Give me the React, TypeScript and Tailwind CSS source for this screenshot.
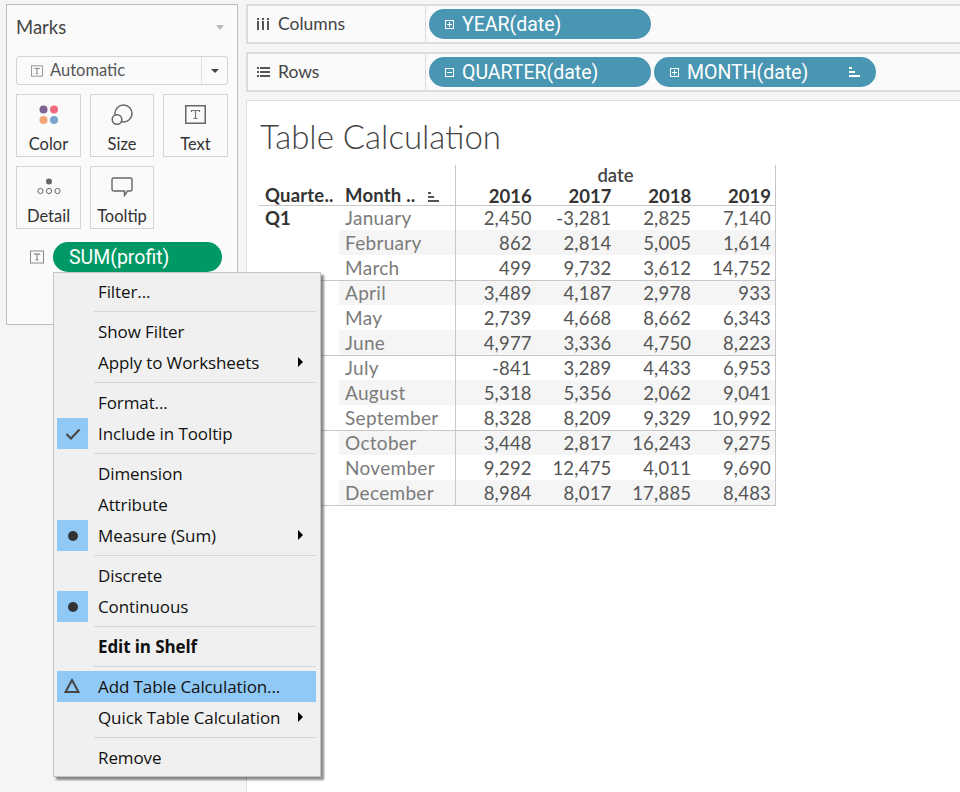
import type { ReactNode } from 'react'

const months = ['January', 'February', 'March', 'April', 'May', 'June', 'July', 'August', 'September', 'October', 'November', 'December']

const profit = [
  ['2,450', '-3,281', '2,825', '7,140'],
  ['862', '2,814', '5,005', '1,614'],
  ['499', '9,732', '3,612', '14,752'],
  ['3,489', '4,187', '2,978', '933'],
  ['2,739', '4,668', '8,662', '6,343'],
  ['4,977', '3,336', '4,750', '8,223'],
  ['-841', '3,289', '4,433', '6,953'],
  ['5,318', '5,356', '2,062', '9,041'],
  ['8,328', '8,209', '9,329', '10,992'],
  ['3,448', '2,817', '16,243', '9,275'],
  ['9,292', '12,475', '4,011', '9,690'],
  ['8,984', '8,017', '17,885', '8,483'],
]

function SortIcon({ color }: { color: string }) {
  return (
    <svg width="12" height="10" viewBox="0 0 12 10" fill={color}>
      <rect x="0" y="0" width="3" height="2" />
      <rect x="0" y="4" width="6" height="2" />
      <rect x="0" y="8" width="11" height="2" />
    </svg>
  )
}

function BoxIcon({ minus }: { minus?: boolean }) {
  return (
    <svg width="9" height="9" viewBox="0 0 9 9" fill="none" stroke="#fff" strokeWidth="1" className="shrink-0">
      <rect x="0.5" y="0.5" width="8" height="8" />
      <path d="M2 4.5H7" />
      {!minus && <path d="M4.5 2V7" />}
    </svg>
  )
}

function TextGlyph({ size = 14 }: { size?: number }) {
  return (
    <svg width={size} height={size} viewBox="0 0 14 14" fill="none" className="shrink-0">
      <rect x="0.5" y="1" width="13" height="12" stroke="#8a8a8a" />
      <path d="M4 4.5V4H10V4.5M7 4V10M5.8 10H8.2" stroke="#777" />
    </svg>
  )
}

function Pill({ label, minus, sort, width }: { label: string; minus?: boolean; sort?: boolean; width: string }) {
  return (
    <div className={`flex h-[30px] items-center rounded-[15px] bg-[#4996b2] pl-4 pr-[15px] text-[19.5px] text-white ${width}`}>
      <BoxIcon minus={minus} />
      <span className="ml-2 pt-[2px] font-['Roboto',sans-serif]">{label}</span>
      {sort && <span className="ml-auto"><SortIcon color="#fff" /></span>}
    </div>
  )
}

function Shelf({ icon, label, children }: { icon: ReactNode; label: string; children: ReactNode }) {
  return (
    <div className="flex h-[40px] border-y-2 border-l-2 border-[#dcdcdc] bg-[#fafafa]">
      <div className="flex w-[178px] items-center gap-[8px] border-r border-[#dcdcdc] pl-2 text-[17.5px] text-[#444]">
        <span className="flex w-[14px] justify-center">{icon}</span>
        <span className="pt-px">{label}</span>
      </div>
      <div className="flex items-center gap-[3px] pl-[3px]">{children}</div>
    </div>
  )
}

function MarkButton({ icon, label }: { icon: ReactNode; label: string }) {
  return (
    <div className="flex h-[63px] flex-col items-center border border-[#d4d4d4] bg-[#fafafa] text-[16.5px] leading-5 text-[#333]">
      <div className="flex h-[39px] items-center">{icon}</div>
      <span>{label}</span>
    </div>
  )
}

function MarksPanel() {
  return (
    <div className="h-[321px] border border-[#bdbdbd] bg-[#fafafa] px-[9px] font-['Lato',sans-serif]">
      <div className="flex h-[51px] items-center justify-between pb-[6px] pr-[4px]">
        <span className="text-[18.5px] text-[#444]">Marks</span>
        <span className="h-0 w-0 border-x-[4px] border-t-[5px] border-x-transparent border-t-[#bbb]" />
      </div>
      <div className="flex h-[29px] items-center rounded-[3px] border border-[#d4d4d4] bg-[#fafafa] text-[16.5px] text-[#555]">
        <div className="flex flex-1 items-center gap-[7px] pl-[14px]">
          <TextGlyph size={12} />
          Automatic
        </div>
        <div className="flex h-full w-[26px] items-center justify-center border-l border-[#e0e0e0]">
          <span className="h-0 w-0 border-x-[4px] border-t-[4px] border-x-transparent border-t-[#444]" />
        </div>
      </div>
      <div className="mt-[9px] grid grid-cols-[65px_64px_65px] gap-x-[9px] gap-y-[9px]">
        <MarkButton
          label="Color"
          icon={
            <svg width="20" height="20" viewBox="0 0 20 20">
              <circle cx="4.5" cy="4.5" r="4" fill="#7b6394" />
              <circle cx="15" cy="4.5" r="4" fill="#f2697f" />
              <circle cx="4.5" cy="15" r="4" fill="#f4a575" />
              <circle cx="15" cy="15" r="4" fill="#7ba3cf" />
            </svg>
          }
        />
        <MarkButton
          label="Size"
          icon={
            <svg width="22" height="22" viewBox="0 0 22 22" fill="none" stroke="#666" strokeWidth="1.5">
              <circle cx="12.5" cy="9.5" r="8.5" />
              <circle cx="6" cy="15.5" r="4.8" fill="#fafafa" />
            </svg>
          }
        />
        <MarkButton
          label="Text"
          icon={
            <svg width="21" height="19" viewBox="0 0 21 19" fill="none">
              <rect x="0.75" y="0.75" width="19.5" height="17.5" stroke="#666" strokeWidth="1.5" />
              <path d="M6.5 7V5.5H14.5V7M10.5 5.5V13.5M8.5 13.5H12.5" stroke="#777" strokeWidth="1.2" />
            </svg>
          }
        />
        <MarkButton
          label="Detail"
          icon={
            <svg width="24" height="17" viewBox="0 0 24 17" fill="none" stroke="#666" strokeWidth="1">
              <circle cx="12" cy="3.5" r="3" fill="#666" stroke="none" />
              <circle cx="3.5" cy="13" r="2.6" />
              <circle cx="12" cy="13" r="2.6" />
              <circle cx="20.5" cy="13" r="2.6" />
            </svg>
          }
        />
        <MarkButton
          label="Tooltip"
          icon={
            <svg width="22" height="20" viewBox="0 0 22 20" fill="none" stroke="#666" strokeWidth="1.4">
              <path d="M2.5 1H19.5Q21 1 21 2.5V12Q21 14 19 14H16.5L13.5 18.5V14H3Q1 14 1 12V2.5Q1 1 2.5 1Z" />
            </svg>
          }
        />
      </div>
      <div className="mt-[13px] flex items-center pl-[14px]">
        <TextGlyph size={14} />
        <div className="ml-[9px] flex h-[30px] w-[169px] items-center rounded-[15px] bg-[#009966] pl-4 pt-[2px] font-['Roboto',sans-serif] text-[19.5px] text-white">
          SUM(profit)
        </div>
      </div>
    </div>
  )
}

function MenuSep() {
  return (
    <div className="flex h-[9px] pl-[37px] pt-1">
      <div className="h-px w-full bg-[#d6d6d6]" />
    </div>
  )
}

function MenuItem({ label, icon, arrow, bold, active, checked }: { label: string; icon?: ReactNode; arrow?: boolean; bold?: boolean; active?: boolean; checked?: boolean }) {
  return (
    <div className={`flex h-[31px] items-center ${active ? 'bg-[#90c8f6]' : ''} ${bold ? 'font-bold' : ''}`}>
      <div className={`flex h-[31px] w-[31px] items-center justify-center ${checked ? 'bg-[#90c8f6]' : ''}`}>{icon}</div>
      <span className="ml-[10px] pt-px">{label}</span>
      {arrow && <span className="mb-[2px] ml-auto mr-[13px] h-0 w-0 border-y-[5px] border-l-[5px] border-y-transparent border-l-black" />}
    </div>
  )
}

const dot = <span className="h-[10px] w-[10px] rounded-full bg-[#333]" />

function ContextMenu() {
  return (
    <div className="absolute left-[53px] top-[272px] w-[268px] border border-[#c4c4c4] bg-[#f0f0f0] pb-[3px] pl-[3px] pr-1 pt-[3px] font-['Open_Sans',sans-serif] text-[17px] tracking-[-0.1px] text-[#111] shadow-[3px_3px_2px_rgba(0,0,0,0.45)]">
      <MenuItem label="Filter..." />
      <MenuSep />
      <MenuItem label="Show Filter" />
      <MenuItem label="Apply to Worksheets" arrow />
      <MenuSep />
      <MenuItem label="Format..." />
      <MenuItem
        label="Include in Tooltip"
        checked
        icon={
          <svg width="16" height="12" viewBox="0 0 16 12" fill="none" stroke="#444" strokeWidth="2">
            <path d="M1.5 6L6 10.5L14.5 1.5" />
          </svg>
        }
      />
      <MenuSep />
      <MenuItem label="Dimension" />
      <MenuItem label="Attribute" />
      <MenuItem label="Measure (Sum)" arrow checked icon={dot} />
      <MenuSep />
      <MenuItem label="Discrete" />
      <MenuItem label="Continuous" checked icon={dot} />
      <MenuSep />
      <MenuItem label="Edit in Shelf" bold />
      <MenuSep />
      <MenuItem
        label="Add Table Calculation..."
        active
        icon={
          <svg width="16" height="15" viewBox="0 0 16 15" fill="none" stroke="#444" strokeWidth="2" className="mb-[2px] mr-[2px]">
            <path d="M8 2L14.5 14H1.5Z" />
          </svg>
        }
      />
      <MenuItem label="Quick Table Calculation" arrow />
      <MenuSep />
      <MenuItem label="Remove" />
    </div>
  )
}

function DataTable() {
  return (
    <div className="w-[517px] border-r border-[#c8c8c8] font-['Lato',sans-serif] text-[18.5px] leading-[24px]">
      <div className="grid h-[40px] grid-cols-[196px_320px]">
        <div className="flex items-end">
          <span className="w-[80px] pl-[6px] font-bold tracking-[0.2px] text-[#333]">Quarte..</span>
          <span className="pl-[6px] font-bold tracking-[0.2px] text-[#333]">Month ..</span>
          <span className="mb-[5px] ml-[13px]"><SortIcon color="#555" /></span>
        </div>
        <div className="border-l border-[#c8c8c8]">
          <div className="h-[20px] text-center font-semibold leading-[20px] text-[#444]">date</div>
          <div className="grid grid-cols-4 font-bold leading-[22px] text-[#333]">
            {['2016', '2017', '2018', '2019'].map((y) => (
              <span key={y} className="pr-1 text-right">{y}</span>
            ))}
          </div>
        </div>
      </div>
      {months.map((m, i) => {
        const first = i % 3 === 0
        const band = i % 2 === 1 ? 'bg-[#f5f5f5]' : ''
        return (
          <div key={m} className={`grid h-[25px] grid-cols-[80px_116px_320px] ${first ? 'border-t border-[#c8c8c8]' : ''}`}>
            <span className="pl-[6px] font-bold text-[#333]">{first ? `Q${i / 3 + 1}` : ''}</span>
            <span className={`pl-[6px] text-[19px] tracking-[0.3px] text-[#7b7b7b] ${first ? '' : 'pt-px'} ${band}`}>{m}</span>
            <div className={`grid grid-cols-4 border-l border-[#c8c8c8] tracking-[0.2px] text-[#555] ${first ? '' : 'pt-px'} ${band}`}>
              {profit[i].map((v, j) => (
                <span key={j} className="pr-1 text-right">{v}</span>
              ))}
            </div>
          </div>
        )
      })}
      <div className="h-px bg-[#c8c8c8]" />
    </div>
  )
}

export default function App() {
  return (
    <div className="relative flex h-[792px] w-[960px] overflow-hidden bg-[#f5f5f5]">
      <div className="w-[246px] shrink-0 pl-[6px] pr-[8px] pt-1">
        <MarksPanel />
      </div>
      <div className="flex flex-1 flex-col pt-1 font-['Lato',sans-serif]">
        <Shelf
          label="Columns"
          icon={
            <svg width="12" height="12" viewBox="0 0 12 12" fill="#555">
              <rect x="0" y="3" width="2" height="9" />
              <rect x="5" y="3" width="2" height="9" />
              <rect x="10" y="3" width="2" height="9" />
              <rect x="0" y="0" width="2" height="2" />
              <rect x="5" y="0" width="2" height="2" />
              <rect x="10" y="0" width="2" height="2" />
            </svg>
          }
        >
          <Pill label="YEAR(date)" width="w-[222px]" />
        </Shelf>
        <div className="mt-[8px]">
          <Shelf
            label="Rows"
            icon={
              <svg width="13" height="10" viewBox="0 0 13 10" fill="#555">
                <rect x="0" y="0" width="2" height="2" />
                <rect x="3" y="0" width="10" height="2" />
                <rect x="0" y="4" width="2" height="2" />
                <rect x="3" y="4" width="10" height="2" />
                <rect x="0" y="8" width="2" height="2" />
                <rect x="3" y="8" width="10" height="2" />
              </svg>
            }
          >
            <Pill label="QUARTER(date)" minus width="w-[222px]" />
            <Pill label="MONTH(date)" sort width="w-[222px]" />
          </Shelf>
        </div>
        <div className="mt-[8px] flex-1 border-l border-t border-[#dcdcdc] bg-white pl-[12px]">
          <h1 className="pb-[5px] pl-px pt-[12px] text-[33px] font-light leading-[47px] text-[#444]">Table Calculation</h1>
          <DataTable />
        </div>
      </div>
      <ContextMenu />
    </div>
  )
}
